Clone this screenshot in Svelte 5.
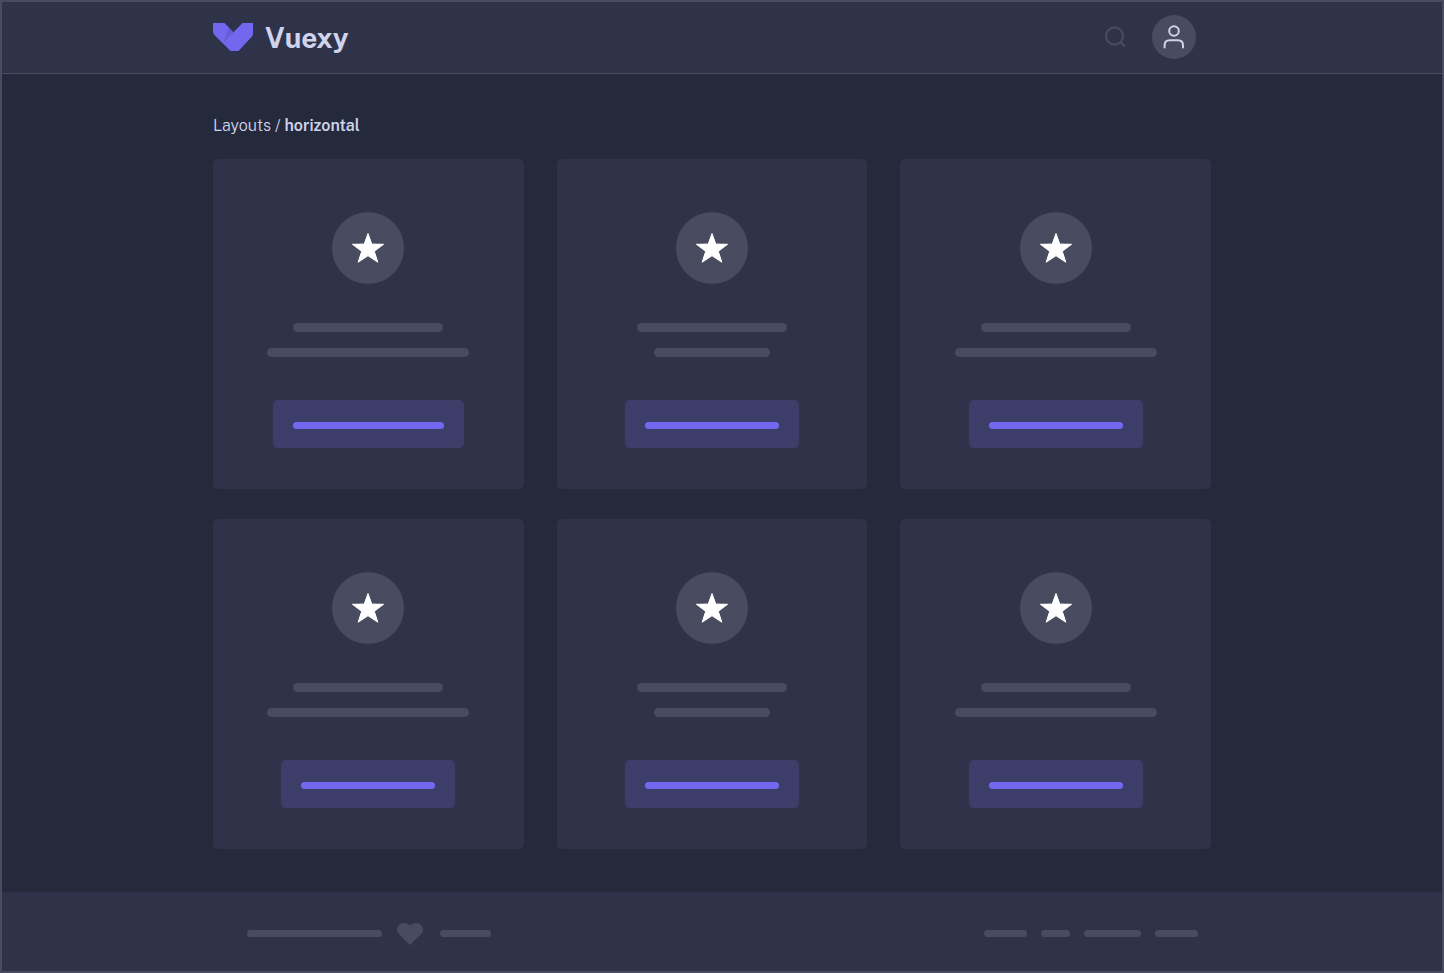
<script>
  const cards = [
    { line: 'wide', action: 'large' },
    { line: 'short', action: 'regular' },
    { line: 'wide', action: 'regular' },
    { line: 'wide', action: 'regular' },
    { line: 'short', action: 'regular' },
    { line: 'wide', action: 'regular' }
  ];
  const links = ['w43', 'w29', 'w57', 'w43'];
</script>

<div class="page">
  <header>
    <div class="container bar">
      <a class="brand" href="#home">
        <svg width="40" height="28" viewBox="0 0 40 28" aria-hidden="true">
          <path fill="#7367f0" d="M0 0V8.5Q0 10.5 1.5 12L17.5 28H25.5L38.5 14Q40 12.5 40 10.5V0H29.5L20.5 9.2L11.5 0Z" />
          <path fill="#161616" opacity=".07" d="M15.5 4.2L10.5 19.5L20.5 9.2Z" />
          <path fill="#161616" opacity=".07" d="M16.5 5.2L10.5 19.5L20.5 9.2Z" />
        </svg>
        <span>Vuexy</span>
      </a>
      <div class="tools">
        <button class="search" aria-label="Search">
          <svg width="24" height="24" viewBox="0 0 24 24" aria-hidden="true">
            <circle cx="10.5" cy="11" r="8.5" />
            <path d="M16.7 17.2L20.5 21" />
          </svg>
        </button>
        <button class="avatar" aria-label="Account">
          <svg width="28" height="28" viewBox="0 0 28 28" aria-hidden="true">
            <circle cx="14" cy="8" r="4.8" />
            <path d="M4.6 24.5V22.3Q4.6 17.3 9.6 17.3H18Q23 17.3 23 22.3V24.5" />
          </svg>
        </button>
      </div>
    </div>
  </header>

  <main>
    <div class="container">
      <nav class="crumbs" aria-label="Breadcrumb"><a href="#layouts">Layouts</a> / <strong>horizontal</strong></nav>
      <div class="grid">
        {#each cards as card}
          <article>
            <div class="badge">
              <svg width="34" height="32" viewBox="0 0 34 32" aria-hidden="true">
                <path d="M17 1.5L20.8 12.1L32.6 12.3L23.3 19.3L26.8 30.2L17 23.7L7.2 30.2L10.7 19.3L1.4 12.3L13.2 12.1Z" />
              </svg>
            </div>
            <div class="line title"></div>
            <div class="line {card.line}"></div>
            <button class="action {card.action}" aria-label="Select"><span></span></button>
          </article>
        {/each}
      </div>
    </div>
  </main>

  <footer>
    <div class="container foot">
      <div class="credit">
        <span class="dash w135"></span>
        <svg width="28" height="22" viewBox="0 0 28 22" aria-hidden="true">
          <path d="M13 22L2.2 11.6C-.6 8.8-.6 4.6 2 2C4.8-.7 10-.8 13 2.6C16-.8 21.2-.7 24 2C26.6 4.6 26.6 8.8 23.8 11.6Z" />
        </svg>
        <span class="dash w51"></span>
      </div>
      <nav class="links" aria-label="Footer">
        {#each links as size}
          <span class="dash {size}"></span>
        {/each}
      </nav>
    </div>
  </footer>
</div>

<style>
  :global(body) {
    margin: 0;
    background: #25293c;
  }
  .page {
    --muted: #494b60;
    box-sizing: border-box;
    min-height: 100vh;
    display: flex;
    flex-direction: column;
    border: 2px solid #494b63;
    background: #25293c;
    color: #cfd3ec;
    font-family: "Public Sans", Inter, sans-serif;
  }
  header,
  main,
  footer {
    padding: 0 40px 0 20px;
  }
  header,
  footer {
    background: #2f3349;
  }
  header {
    border-bottom: 1px solid #4b4d63;
  }
  .container {
    box-sizing: border-box;
    max-width: 998px;
    margin: 0 auto;
  }
  .bar {
    display: flex;
    align-items: center;
    justify-content: space-between;
    padding: 13px 15px 14px 0;
  }
  .brand {
    display: flex;
    align-items: center;
    gap: 12px;
    color: inherit;
    text-decoration: none;
    font-size: 28px;
    line-height: 36px;
    font-weight: 700;
  }
  .brand span {
    padding-top: 2px;
  }
  .tools {
    display: flex;
    align-items: center;
    gap: 24px;
  }
  button {
    border: 0;
    padding: 0;
    cursor: pointer;
  }
  .search,
  .avatar {
    display: flex;
    align-items: center;
    justify-content: center;
  }
  .search {
    background: none;
  }
  .search svg,
  .avatar svg {
    fill: none;
    stroke: var(--muted);
    stroke-width: 2;
    stroke-linecap: round;
  }
  .avatar {
    width: 44px;
    height: 44px;
    border-radius: 50%;
    background: var(--muted);
  }
  .avatar svg {
    stroke: #cfd3ec;
  }
  main {
    flex: 1;
    padding-top: 41px;
    padding-bottom: 42px;
  }
  .crumbs {
    font-size: 16px;
    line-height: 22px;
    font-weight: 300;
    margin-bottom: 22px;
  }
  .crumbs a {
    color: inherit;
    text-decoration: none;
  }
  .crumbs strong {
    font-weight: 600;
  }
  .grid {
    display: grid;
    grid-template-columns: repeat(3, 1fr);
    gap: 30px 33px;
  }
  article {
    display: flex;
    flex-direction: column;
    align-items: center;
    padding: 53px 20px 41px;
    border-radius: 5px;
    background: #2f3349;
  }
  .badge {
    width: 72px;
    height: 72px;
    border-radius: 50%;
    background: var(--muted);
    display: flex;
    align-items: center;
    justify-content: center;
    margin-bottom: 39px;
  }
  .badge path {
    fill: #fff;
    stroke: #fff;
    stroke-linejoin: round;
  }
  .line {
    height: 9px;
    border-radius: 5px;
    background: var(--muted);
  }
  .title {
    width: 150px;
    margin-bottom: 16px;
  }
  .wide {
    width: 202px;
  }
  .short {
    width: 116px;
  }
  .action {
    margin-top: 43px;
    height: 48px;
    border-radius: 5px;
    padding: 3px 20px 0;
    background: #3d3d69;
    display: flex;
    align-items: center;
  }
  .action span {
    height: 7px;
    width: 134px;
    border-radius: 4px;
    background: #7367f0;
  }
  .large span {
    width: 151px;
  }
  .foot {
    height: 79px;
    padding: 4px 13px 0 34px;
    display: flex;
    align-items: center;
    justify-content: space-between;
  }
  .credit,
  .links {
    display: flex;
    align-items: center;
    gap: 14px;
  }
  .credit {
    gap: 15px;
  }
  .credit path {
    fill: var(--muted);
  }
  .dash {
    height: 7px;
    border-radius: 4px;
    background: var(--muted);
  }
  .w29 {
    width: 29px;
  }
  .w43 {
    width: 43px;
  }
  .w51 {
    width: 51px;
  }
  .w57 {
    width: 57px;
  }
  .w135 {
    width: 135px;
  }
</style>
